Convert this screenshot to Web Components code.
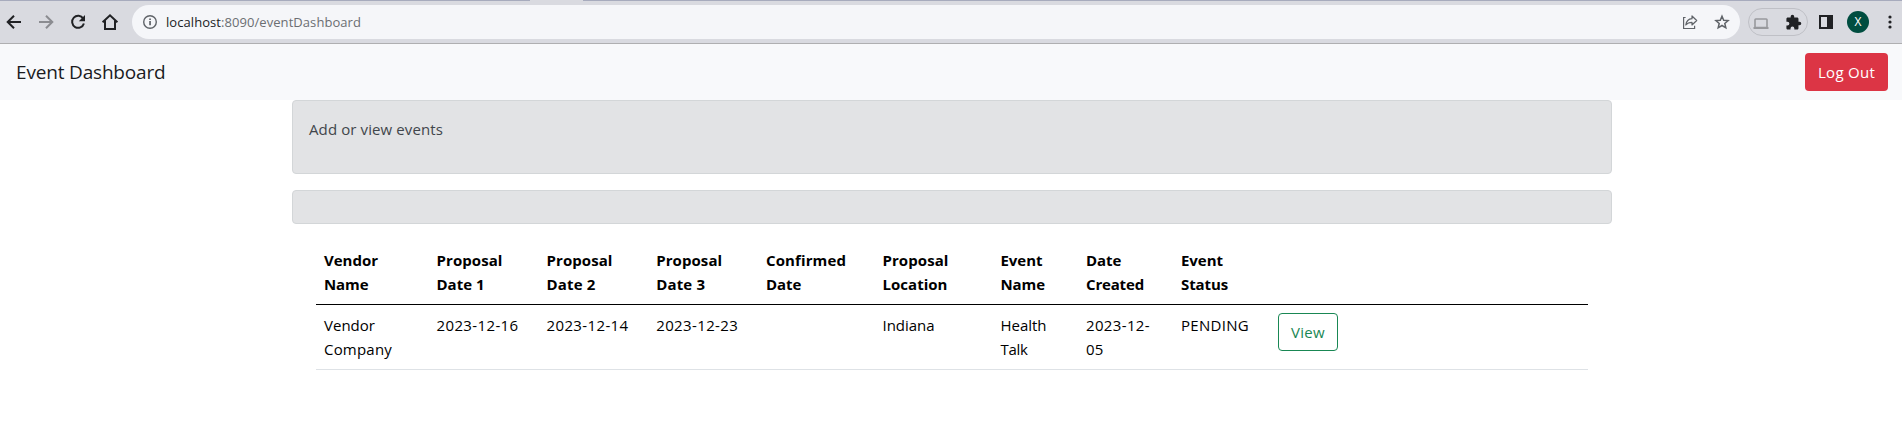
<!DOCTYPE html>
<html lang="en">
<head>
<meta charset="utf-8">
<title>Event Dashboard</title>
<style>
body{margin:0;background:#fff;font-family:"Open Sans","Noto Sans",sans-serif;font-size:15px;line-height:24px;color:#000;overflow:hidden}
</style>
</head>
<body>
<browser-bar></browser-bar>
<nav-bar><fit-text slot="brand" w="149.5">Event Dashboard</fit-text><fit-text slot="action" w="57">Log Out</fit-text></nav-bar>
<main-area>
<info-card style="height:72px"><fit-text w="134">Add or view events</fit-text></info-card>
<info-card style="height:32px"></info-card>
<event-table></event-table>
</main-area>
<script>
const define=(name,html,setup)=>customElements.define(name,class extends HTMLElement{
  constructor(){super();this.attachShadow({mode:'open'}).innerHTML=html;}
  connectedCallback(){if(setup)setup(this);}
});

define('browser-bar',`<style>
:host{display:flex;box-sizing:border-box;height:44px;padding:4px 0 4px;background:#d9dae0;border-top:1px solid #a7abbd;border-bottom:1px solid #afafb1;align-items:center;position:relative}
.tab{position:absolute;left:530px;top:-1px;width:53px;height:1px;background:#d9dae0}
svg{display:block;flex:none}
.nav{display:flex;width:132px;box-sizing:border-box;padding-left:4px;gap:12px;flex:none}
.pill{display:flex;align-items:center;width:1608px;height:34px;border-radius:17px;background:#f5f6f9;box-sizing:border-box;padding:0 8px 0 8px;flex:none}
.url{font-size:13px;color:#6b6e72;line-height:20px;margin-left:6px;flex:1;display:flex}
.url .host{color:#202124}
.ext{display:flex;align-items:center;box-sizing:border-box;width:60px;height:28px;border:1px solid #bfc0c6;border-radius:14px;margin-left:8px;padding-left:2px;gap:14px;flex:none}
.panel{margin-left:8px}
.avatar{width:22px;height:22px;border-radius:50%;background:#004d40;color:#fff;font-size:12px;line-height:22px;text-align:center;margin-left:11px;flex:none}
.menu{margin-left:11px}
</style>
<div class="tab"></div>
<div class="nav">
<svg width="20" height="20" viewBox="0 0 20 20" fill="none" stroke="#202124" stroke-width="2"><path d="M17 10H4.500M10 3.700 3.700 10l6.300 6.300"/></svg>
<svg width="20" height="20" viewBox="0 0 20 20" fill="none" stroke="#8b8c91" stroke-width="2"><path d="M3 10h12.500M10 3.700 16.300 10l-6.300 6.300"/></svg>
<svg width="20" height="20" viewBox="0 0 20 20"><path d="M15.200 6.600A6 6 0 1 0 15.900 11.500" fill="none" stroke="#202124" stroke-width="2"/><path d="M17 3v6.200h-6.200z" fill="#202124"/></svg>
<svg width="20" height="20" viewBox="0 0 20 20" fill="none" stroke="#202124" stroke-width="2"><path d="M2.600 10.300 10 3.300l7.400 7M5 8.800V17h10V8.800"/></svg>
</div>
<div class="pill">
<svg width="20" height="20" viewBox="0 0 20 20"><circle cx="10" cy="10" r="6.300" fill="none" stroke="#5f6368" stroke-width="1.400"/><path d="M9.200 9h1.700v4.300H9.200zM9.200 6.500h1.700v1.600H9.200z" fill="#5f6368"/></svg>
<div class="url"><fit-text class="host" w="55">localhost</fit-text><fit-text w="140">:8090/eventDashboard</fit-text></div>
<svg width="20" height="20" viewBox="0 0 20 20" fill="none" stroke="#5f6368" stroke-width="1.200"><path d="M5.600 5.500H3.600v11h11v-2.700"/><path d="M12 4v2.700C8.200 7 6.300 9.400 5.800 13c1.600-2 3.400-2.700 6.200-2.700V13l4.700-4.500z" stroke-linejoin="round"/></svg>
<svg style="margin-left:12px" width="20" height="20" viewBox="0 0 20 20" fill="none" stroke="#5f6368" stroke-width="1.500"><path d="m10 4.200 1.700 4 4.400.4-3.300 2.900 1 4.300-3.800-2.300-3.800 2.300 1-4.300-3.300-2.900 4.400-.4z"/></svg>
</div>
<div class="ext">
<svg width="20" height="20" viewBox="0 0 20 20"><rect x="4" y="7" width="12" height="8.500" rx=".8" fill="none" stroke="#98999d" stroke-width="1.600"/><path d="M2.500 15h15v2h-15z" fill="#98999d"/></svg>
<svg width="17" height="17" viewBox="0 0 24 24" fill="#202124"><path d="M20.500 11H19V7c0-1.100-.9-2-2-2h-4V3.500a2.500 2.500 0 0 0-5 0V5H4c-1.100 0-2 .9-2 2v3.800h1.500a2.700 2.700 0 0 1 0 5.400H2V20c0 1.100.9 2 2 2h3.800v-1.500a2.700 2.700 0 0 1 5.400 0V22H17c1.100 0 2-.9 2-2v-4h1.500a2.500 2.500 0 0 0 0-5z"/></svg>
</div>
<svg class="panel" width="20" height="20" viewBox="0 0 20 20"><path fill="#202124" fill-rule="evenodd" d="M3 3h14v14H3zM5 5v10h6V5z"/></svg>
<div class="avatar">X</div>
<svg class="menu" width="20" height="20" viewBox="0 0 20 20" fill="#202124"><circle cx="10" cy="5" r="1.600"/><circle cx="10" cy="10" r="1.600"/><circle cx="10" cy="15" r="1.600"/></svg>`);

define('nav-bar',`<style>
:host{display:flex;box-sizing:border-box;height:56px;background:#f8f9fb;align-items:center;justify-content:space-between;padding:0 14px 0 16px}
.brand{font-size:19px;line-height:30px;color:#1b1c1e}
button{font:inherit;color:#fff;background:#dc3545;border:0;border-radius:4px;width:83px;height:38px;padding:0}
</style><div class="brand"><slot name="brand"></slot></div><button><slot name="action"></slot></button>`);

define('main-area','<style>:host{display:flex;flex-direction:column;gap:16px;width:1320px;margin-left:292px}</style><slot></slot>');

define('info-card',`<style>:host{display:block;border:1px solid #d3d6d8;border-radius:4px;background:#e2e3e5;color:#41464b}
div{padding:16px}</style><div><slot></slot></div>`);

define('view-button',`<style>:host{display:block}
button{font:inherit;color:#198754;background:#fff;border:1px solid #198754;border-radius:4px;width:60px;height:38px;padding:0;display:block}
</style><button><fit-text w="34">View</fit-text></button>`);

const head=[[['Vendor',54],['Name',44.5]],[['Proposal',66],['Date 1',48]],[['Proposal',66],['Date 2',49]],[['Proposal',66],['Date 3',49]],
 [['Confirmed',80],['Date',35.5]],[['Proposal',66],['Location',65]],[['Event',42],['Name',44.5]],[['Date',35.5],['Created',58]],[['Event',42],['Status',47]],[]];
const row=[[['Vendor',51],['Company',68]],[['2023-12-16',82]],[['2023-12-14',82]],[['2023-12-23',82]],[],[['Indiana',52]],
 [['Health',46]],[['2023-12-',64],['05',17.5]],[['PENDING',68]]];
row[6].push(['Talk',27]);
const lines=c=>c.map(([t,w])=>`<fit-text w="${w}">${t}</fit-text>`).join('<br>');
define('event-table',`<style>
:host{display:block;padding:0 24px}
table{width:1272px;table-layout:fixed;border-collapse:separate;border-spacing:0}
th,td{padding:8px;text-align:left;vertical-align:top;box-sizing:border-box}
th{border-bottom:1px solid #000;font-weight:700;height:65px}
td{border-bottom:1px solid #dee2e6;height:65px}
</style><table><colgroup>${[112.5,110,109.7,109.8,116.5,118,85.5,95,97,318].map(w=>`<col style="width:${w}px">`).join('')}</colgroup>
<thead><tr>${head.map(c=>`<th>${lines(c)}</th>`).join('')}</tr></thead>
<tbody><tr>${row.map(c=>`<td>${lines(c)}</td>`).join('')}<td><view-button></view-button></td></tr></tbody></table>`);

/* One line of text whose tracking is spread over a given width. Registered
   last, so that each measurement sees the font size of its container. */
define('fit-text','<style>:host{display:inline-block;white-space:nowrap;vertical-align:top}</style><slot></slot>',el=>{
  const w=parseFloat(el.getAttribute('w'));
  const n=el.textContent.length;
  if(w)el.style.letterSpacing=((w-el.getBoundingClientRect().width)/n).toFixed(3)+'px';
});
</script>
</body>
</html>
